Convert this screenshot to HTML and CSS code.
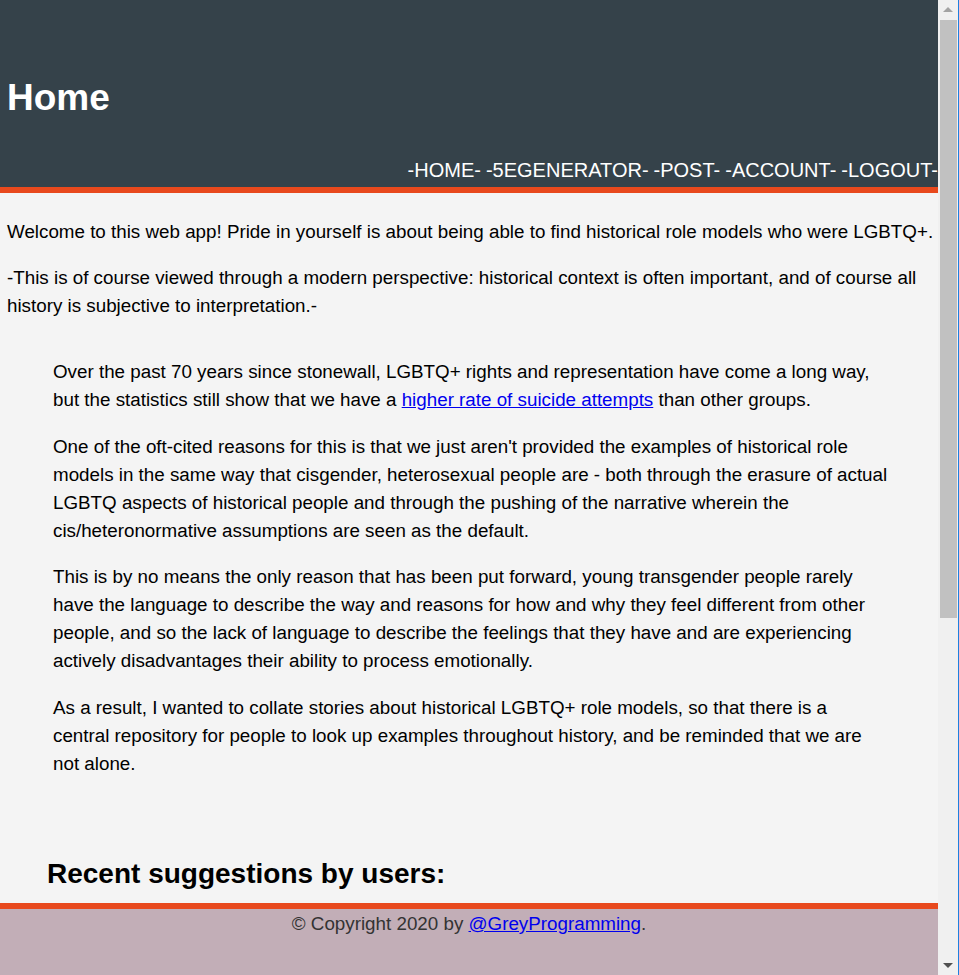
FILE: index.html
```html
<!DOCTYPE html>
<html lang="en">
<head>
<meta charset="utf-8">
<title>Home</title>
<link rel="stylesheet" href="styles.css">
</head>
<body>
<div class="page">
  <header class="site-header">
    <h1 class="site-title">Home</h1>
    <nav class="site-nav">
      <a class="nav-link" href="#">-HOME-</a>
      <a class="nav-link" href="#">-5EGENERATOR-</a>
      <a class="nav-link" href="#">-POST-</a>
      <a class="nav-link" href="#">-ACCOUNT-</a>
      <a class="nav-link" href="#">-LOGOUT-</a>
    </nav>
  </header>
  <main class="content">
    <p class="intro">Welcome to this web app! Pride in yourself is about being able to find historical role models who were LGBTQ+.</p>
    <p class="intro">-This is of course viewed through a modern perspective: historical context is often important, and of course all history is subjective to interpretation.-</p>
    <section class="about">
      <p>Over the past 70 years since stonewall, LGBTQ+ rights and representation have come a long way, but the statistics still show that we have a <a href="#">higher rate of suicide attempts</a> than other groups.</p>
      <p>One of the oft-cited reasons for this is that we just aren't provided the examples of historical role models in the same way that cisgender, heterosexual people are - both through the erasure of actual LGBTQ aspects of historical people and through the pushing of the narrative wherein the cis/heteronormative assumptions are seen as the default.</p>
      <p>This is by no means the only reason that has been put forward, young transgender people rarely have the language to describe the way and reasons for how and why they feel different from other people, and so the lack of language to describe the feelings that they have and are experiencing actively disadvantages their ability to process emotionally.</p>
      <p class="closing">As a result, I wanted to collate stories about historical LGBTQ+ role models, so that there is a central repository for people to look up examples throughout history, and be reminded that we are not alone.</p>
    </section>
    <h2 class="suggestions-title">Recent suggestions by users:</h2>
    <div class="suggestions"></div>
  </main>
  <footer class="site-footer">
    <p class="footer-text">© Copyright 2020 by <a href="#">@GreyProgramming</a>.</p>
  </footer>
</div>
<div class="scrollbar" aria-hidden="true">
  <span class="scroll-arrow scroll-up"></span>
  <span class="scroll-thumb"></span>
  <span class="scroll-arrow scroll-down"></span>
</div>
</body>
</html>
```
FILE: styles.css
```css
html, body {
  margin: 0;
  padding: 0;
}
body {
  background: #f4f4f4;
  color: #000;
  font-family: "Liberation Sans", Arial, sans-serif;
  font-size: 18.8px;
  line-height: 28px;
}
a {
  color: #0000ee;
}
.page {
  width: 938px;
}
.site-header {
  background: #35424a;
  color: #fff;
  height: 187px;
  border-bottom: 6px solid #e8491d;
  display: flex;
  flex-direction: column;
}
.site-title {
  margin: 0;
  padding: 77px 0 0 7px;
  font-size: 37px;
  line-height: 42px;
  font-weight: bold;
}
.site-nav {
  margin-top: auto;
  padding-bottom: 5px;
  display: flex;
  justify-content: flex-end;
  gap: 5px;
  font-size: 20px;
  line-height: 23px;
}
.nav-link {
  color: #fff;
  text-decoration: none;
}
.content {
  padding: 6px 2px 0 7px;
}
.content p {
  margin: 18.5px 0;
}
.about {
  margin: 38px 47px 0 46px;
}
.about .closing {
  padding-right: 10px;
}
.suggestions-title {
  margin: 80px 0 0 40px;
  font-size: 28px;
  line-height: 32px;
}
.suggestions {
  height: 560px;
}
.site-footer {
  position: fixed;
  left: 0;
  bottom: 0;
  width: 938px;
  height: 65px;
  padding-top: 1px;
  background: #c2aeb7;
  border-top: 6px solid #e8491d;
  text-align: center;
  color: #333;
}
.site-footer .footer-text {
  margin: 0;
}
.scrollbar {
  position: fixed;
  top: 0;
  right: 0;
  bottom: 0;
  width: 20px;
  background: #f0f0f0;
  border-right: 1px solid #1e80e0;
  display: flex;
  flex-direction: column;
  align-items: center;
}
.scroll-arrow {
  width: 0;
  height: 0;
  border-left: 5px solid transparent;
  border-right: 5px solid transparent;
}
.scroll-up {
  margin-top: 7px;
  border-bottom: 5px solid #a3a3a3;
}
.scroll-thumb {
  margin-top: 8px;
  width: 17px;
  height: 598px;
  background: #c1c1c1;
}
.scroll-down {
  margin-top: auto;
  margin-bottom: 7px;
  border-top: 5px solid #505050;
}
```
